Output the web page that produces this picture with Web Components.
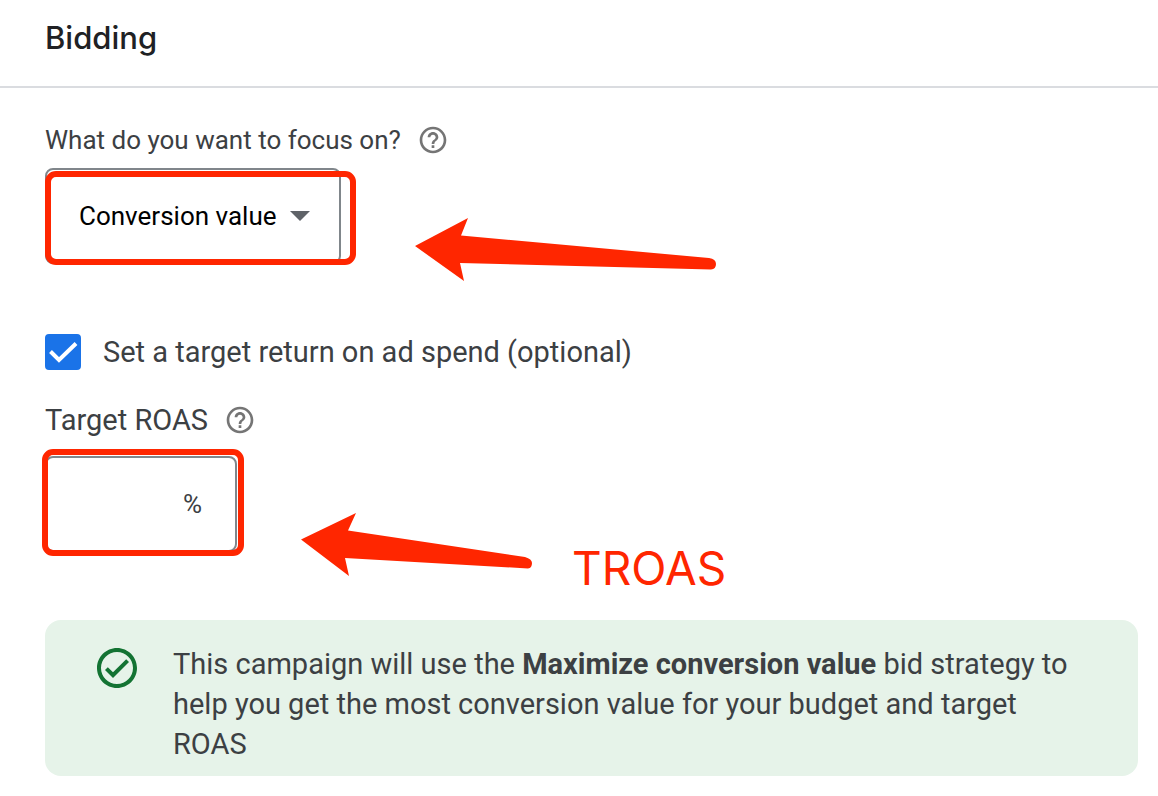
<!DOCTYPE html>
<html lang="en">
<head>
<meta charset="utf-8">
<meta name="viewport" content="width=device-width, initial-scale=1">
<title>Bidding</title>
<style>
  body { margin: 0; background: #fff; color: #3c4043; font-family: Roboto, sans-serif; font-size: 29px; line-height: 40px; }
</style>
</head>
<body>
<bidding-page></bidding-page>

<template id="bidding-page">
  <style>
    :host { display: block; }
    header { padding: 17px 45px 27px; border-bottom: 2px solid #dadce0; }
    h2 { margin: 0; font: 500 31px/42px Inter, sans-serif; color: #202124; }
    main { display: flex; flex-direction: column; padding: 32px 20px 20px 45px; }
    .label { display: flex; align-items: center; gap: 16px; }
    .small { font-size: 26px; }
    .row { display: flex; align-items: center; height: 96px; }
    .focus { margin-top: 8px; gap: 74px; }
    .target { margin-top: 16px; gap: 64px; }
    check-option { margin: 68px 0 28px; }
    info-note { margin-top: 68px; }
    .callout { margin-left: -24px; padding-top: 128px; font: 400 46px/56px Inter, sans-serif; color: #ff2600; }
    .focus mark-arrow { padding-top: 66px; }
    .target mark-arrow { padding-top: 80px; }
  </style>
  <header><h2>Bidding</h2></header>
  <main>
    <div class="label small"><span>What do you want to focus on?</span><help-icon></help-icon></div>
    <div class="row focus">
      <marked-field style="--top:3px;--left:0px;--right:-15px;--bottom:-1px"><focus-select></focus-select></marked-field>
      <mark-arrow shape="long"></mark-arrow>
    </div>
    <check-option>Set a target return on ad spend (optional)</check-option>
    <div class="label"><span>Target ROAS</span><help-icon></help-icon></div>
    <div class="row target">
      <marked-field style="--top:-7px;--left:-3px;--right:-7px;--bottom:-4px"><percent-field></percent-field></marked-field>
      <mark-arrow shape="short"></mark-arrow>
      <span class="callout">TROAS</span>
    </div>
    <info-note>This campaign will use the <b>Maximize conversion value</b> bid strategy to help you get the most conversion value for your budget and target ROAS</info-note>
  </main>
</template>

<template id="help-icon">
  <style>
    :host { display: flex; }
    button { display: flex; padding: 0; border: 0; background: none; cursor: pointer; }
    svg { width: 32px; height: 32px; fill: #757575; }
  </style>
  <button type="button" aria-label="Help"><svg viewBox="0 0 24 24"><path d="M11 18h2v-2h-2v2zm1-16C6.48 2 2 6.48 2 12s4.48 10 10 10 10-4.48 10-10S17.52 2 12 2zm0 18c-4.41 0-8-3.59-8-8s3.59-8 8-8 8 3.59 8 8-3.59 8-8 8zm0-14c-2.21 0-4 1.79-4 4h2c0-1.1.9-2 2-2s2 .9 2 2c0 2-3 1.75-3 5h2c0-2.25 3-2.5 3-5 0-2.21-1.79-4-4-4z"/></svg></button>
</template>

<template id="marked-field">
  <style>
    :host { display: block; position: relative; }
    .mark { position: absolute; top: var(--top); left: var(--left); right: var(--right); bottom: var(--bottom); border: 6px solid #ff2600; border-radius: 11px; pointer-events: none; }
  </style>
  <slot></slot><div class="mark"></div>
</template>

<template id="focus-select">
  <style>
    :host { display: grid; align-items: center; }
    select, svg { grid-area: 1 / 1; }
    select { appearance: none; height: 96px; margin: 0; padding: 0 62px 0 32px; border: 2px solid #80868b; border-radius: 8px; background: #fff; color: #000; font: 400 26px/40px Roboto, sans-serif; }
    svg { justify-self: end; width: 20px; height: 10px; margin-right: 31px; fill: #5f6368; pointer-events: none; }
  </style>
  <select aria-label="What do you want to focus on?"><option>Conversion value</option></select>
  <svg viewBox="0 0 20 10"><path d="M0 0h20L10 10z"/></svg>
</template>

<template id="percent-field">
  <style>
    :host { display: block; }
    label { box-sizing: border-box; display: flex; align-items: center; width: 192px; height: 96px; padding: 0 33px 0 30px; border: 2px solid #80868b; border-radius: 8px; font-size: 26px; }
    input { flex: 1; min-width: 0; padding: 0; border: 0; outline: 0; background: none; color: inherit; font: inherit; }
  </style>
  <label><input type="text" inputmode="decimal" aria-label="Target ROAS"><span>%</span></label>
</template>

<template id="check-option">
  <style>
    :host { display: block; }
    label { display: flex; align-items: center; gap: 22px; }
    .box { display: grid; }
    input, svg { grid-area: 1 / 1; width: 36px; height: 36px; margin: 0; }
    input { appearance: none; border: 2px solid #5f6368; border-radius: 4px; }
    input:checked { border-color: #1a73e8; background: #1a73e8; }
    svg { fill: none; stroke: none; stroke-width: 4; pointer-events: none; }
    input:checked + svg { stroke: #fff; }
  </style>
  <label><span class="box"><input type="checkbox" checked><svg viewBox="0 0 36 36"><path d="M5.500 17.500L14 26 31 9.500"/></svg></span><span><slot></slot></span></label>
</template>

<template id="info-note">
  <style>
    :host { display: flex; gap: 32px; padding: 24px 60px 12px 48px; border-radius: 16px; background: #e6f3e9; }
    svg { flex: none; width: 48px; height: 48px; fill: #137333; }
    p { margin: 0; }
  </style>
  <svg viewBox="0 0 24 24" aria-hidden="true"><path d="M16.59 7.58L10 14.17l-2.59-2.58L6 13l4 4 8-8zM12 2C6.48 2 2 6.48 2 12s4.48 10 10 10 10-4.48 10-10S17.52 2 12 2zm0 18c-4.42 0-8-3.58-8-8s3.58-8 8-8 8 3.58 8 8-3.58 8-8 8z"/></svg>
  <p><slot></slot></p>
</template>

<script>
  class TemplateElement extends HTMLElement {
    constructor() {
      super();
      const template = document.getElementById(this.localName);
      this.attachShadow({ mode: 'open' }).append(template.content.cloneNode(true));
    }
  }
  for (const name of ['help-icon', 'marked-field', 'focus-select', 'percent-field', 'check-option', 'info-note']) {
    customElements.define(name, class extends TemplateElement {});
  }

  const arrows = {
    long: [301, 63, 'M0 28L53 0 46 17.5 294 40Q301 41 301 46 301 51 296 51.500L45 45 49 63Z'],
    short: [231, 63, 'M0 26.5L55 0 47 17.5 224 44Q231 46 231 50 231 55 227 55.500L44 45 48 63Z']
  };
  customElements.define('mark-arrow', class extends HTMLElement {
    constructor() {
      super();
      this.attachShadow({ mode: 'open' });
    }
    connectedCallback() {
      const [w, h, d] = arrows[this.getAttribute('shape')];
      this.shadowRoot.innerHTML = `<style>:host{display:block}svg{display:block;fill:#ff2600}</style>
        <svg width="${w}" height="${h}" viewBox="0 0 ${w} ${h}" aria-hidden="true"><path d="${d}"/></svg>`;
    }
  });
  customElements.define('bidding-page', class extends TemplateElement {});
</script>
</body>
</html>
